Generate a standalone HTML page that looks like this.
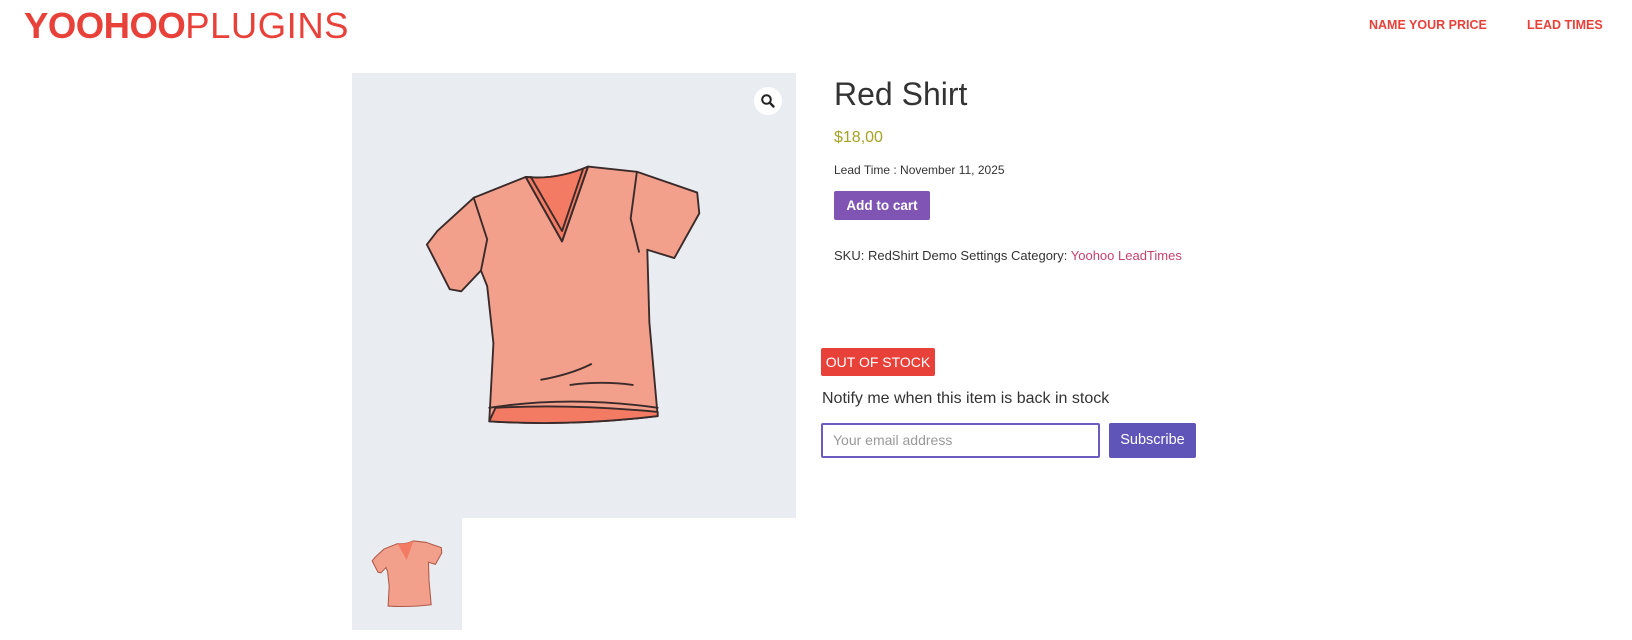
<!DOCTYPE html>
<html><head><meta charset="utf-8"><style>
*{margin:0;padding:0;box-sizing:border-box}
body{width:1632px;height:640px;background:#fff;font-family:"Liberation Sans",sans-serif;position:relative;overflow:hidden;color:#333}
.a{position:absolute;white-space:nowrap}
</style></head><body>
<div class="a" style="left:24px;top:6px;font-size:36.5px;line-height:40px;color:#e8413a"><b style="letter-spacing:-0.5px">YOOHOO</b><span style="letter-spacing:0.5px">PLUGINS</span></div>
<div class="a" style="left:1369px;top:18px;font-size:12.5px;font-weight:bold;color:#e8413a">NAME YOUR PRICE</div>
<div class="a" style="left:1527px;top:18px;font-size:12.5px;font-weight:bold;color:#e8413a">LEAD TIMES</div>

<div class="a" style="left:352px;top:73px;width:444px;height:445px;background:#e9ecf1"></div>
<div class="a" style="left:352px;top:518px;width:110px;height:112px;background:#e9ecf1"></div>
<div class="a" style="left:754px;top:87px;width:28px;height:28px;border-radius:50%;background:#fff"></div>
<svg class="a" style="left:760px;top:93px" width="16" height="16" viewBox="0 0 16 16"><circle cx="6.5" cy="6.5" r="4.3" fill="none" stroke="#222" stroke-width="2"/><path d="M9.7 9.7L13.5 13.5" stroke="#222" stroke-width="2.4" stroke-linecap="round"/></svg>

<svg class="a" style="left:352px;top:73px" width="444" height="445" viewBox="0 0 427 428">
<g stroke="#3a2a2a" stroke-width="1.8" stroke-linejoin="round" stroke-linecap="round">
<path d="M117 120 L167 100 Q197 103 227 90 L274 95 L332 115 L334 135 L310 178 L284 170 L286 240 L294 330 Q210 340 132 335 L136 260 L130 205 L124 190 L105 210 L94 208 L72 165 L82 152 Z" fill="#f2a08c"/>
<path d="M167 100 Q197 103 227 90 L202 162 Z" fill="#f47b63"/>
<path d="M167 100 L202 162 L227 90 M172 100 L202 152 L222 93" fill="none"/>
<path d="M138 322 Q210 318 294 326 L294 330 Q210 340 132 335 Z" fill="#f47b63"/>
<path d="M117 120 L130 160 L124 190 M274 95 L268 140 L276 172 M132 322 Q210 310 294 322 M182 295 Q210 290 230 280 M210 300 Q240 296 270 300" fill="none"/>
</g></svg>
<svg class="a" style="left:369px;top:533px" width="85" height="85" viewBox="60 60 320 320">
<path d="M117 120 L167 100 Q197 103 227 90 L274 95 L332 115 L334 135 L310 178 L284 170 L286 240 L294 330 Q210 340 132 335 L136 260 L130 205 L124 190 L105 210 L94 208 L72 165 L82 152 Z" fill="#f2a08c" stroke="#b05a48" stroke-width="4"/>
<path d="M167 100 Q197 103 227 90 L202 162 Z" fill="#f47b63"/></svg>

<div class="a" style="left:834px;top:74px;font-size:32px;line-height:40px;color:#333">Red Shirt</div>
<div class="a" style="left:834px;top:128px;font-size:16px;line-height:20px;color:#a5a229">$18,00</div>
<div class="a" style="left:834px;top:162px;font-size:12px;line-height:16px;color:#333">Lead Time : November 11, 2025</div>
<div class="a" style="left:834px;top:191px;width:96px;height:29px;background:#7f54b3;border-radius:2px;color:#fff;font-weight:bold;font-size:13.5px;line-height:29px;text-align:center">Add to cart</div>
<div class="a" style="left:834px;top:248px;font-size:13px;line-height:16px;color:#333">SKU: RedShirt Demo Settings Category: <span style="color:#c5426b">Yoohoo LeadTimes</span></div>

<div class="a" style="left:821px;top:348px;width:114px;height:28px;background:#e8413a;border-radius:2px;color:#fff;font-size:14px;line-height:28px;text-align:center">OUT OF STOCK</div>
<div class="a" style="left:822px;top:389px;font-size:16px;line-height:20px;color:#333">Notify me when this item is back in stock</div>
<div class="a" style="left:821px;top:423px;width:279px;height:35px;border:2px solid #6a5cc0;border-radius:2px;font-size:14px;line-height:31px;padding-left:10px;color:#999">Your email address</div>
<div class="a" style="left:1109px;top:423px;width:87px;height:35px;background:#5f55b8;border-radius:2px;color:#fff;font-size:14.5px;line-height:35px;text-align:center">Subscribe</div>
</body></html>
